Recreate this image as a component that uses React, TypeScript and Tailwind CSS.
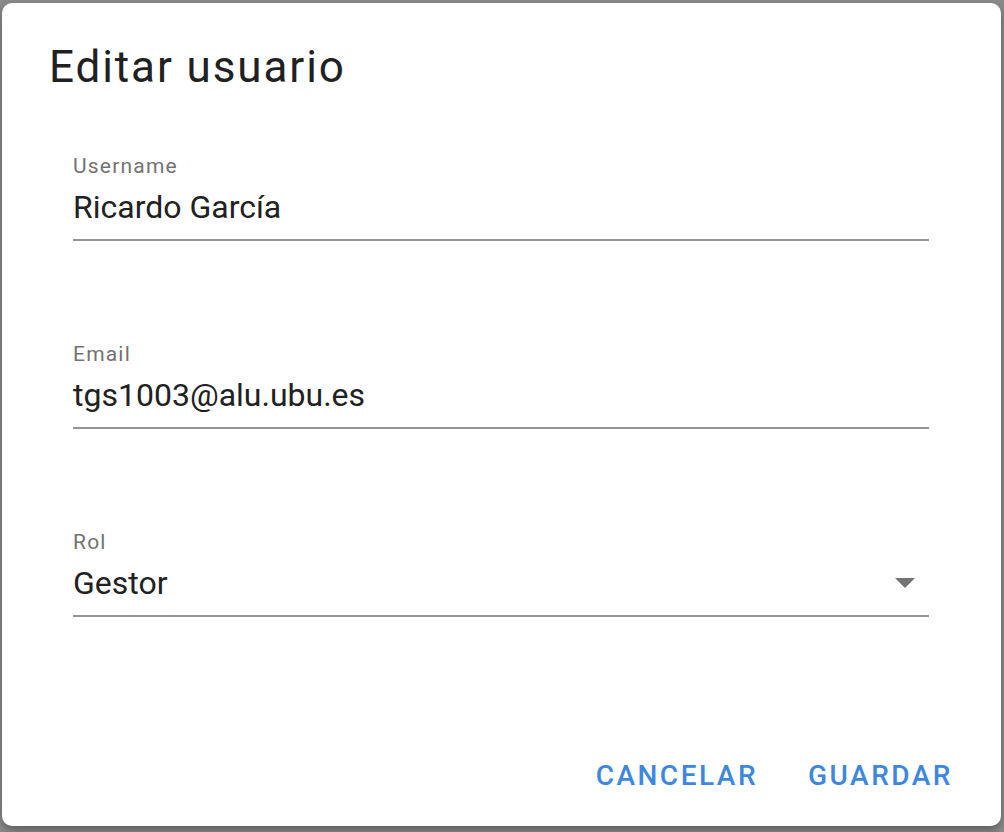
import React from "react";

const Field = ({ label, value, select }: { label: string; value: string; select?: boolean }) => {
  return (
    <div className="flex flex-col border-b-2 border-[#949494] pb-[12px]">
      <span className="text-[21px] leading-[24px] tracking-[1.2px] text-[#737373]">{label}</span>
      <div className="mt-[9px] flex items-center justify-between">
        <span className="text-[32px] leading-[40px] text-[#212121]">{value}</span>
        {select && (
          <svg width="20" height="10" viewBox="0 0 20 10" className="mr-[14px]">
            <path d="M0 0 L20 0 L10 10 Z" fill="#737373" />
          </svg>
        )}
      </div>
    </div>
  );
};

export default function App() {
  return (
    <div
      className="h-[832px] w-full overflow-hidden bg-[#8b8b8b] pt-[3px] pl-[2px]"
      style={{ fontFamily: "Roboto, 'Liberation Sans', sans-serif" }}
    >
      <div className="flex h-[823px] w-[999px] flex-col rounded-[10px] bg-white shadow-[0_4px_10px_rgba(0,0,0,0.35)]">
        <h1 className="pt-[38px] pl-[47px] text-[44px] leading-[52px] tracking-[1.9px] text-[#212121]">
          Editar usuario
        </h1>

        <div className="mt-[61px] flex flex-col gap-[101px] pl-[71px] pr-[72px]">
          <Field label="Username" value="Ricardo García" />
          <Field label="Email" value="tgs1003@alu.ubu.es" />
          <Field label="Rol" value="Gestor" select />
        </div>

        <div className="mt-auto flex justify-end gap-[18px] pb-[32px] pr-[32px]">
          <button className="px-[16px] text-[28px] font-medium leading-[36px] tracking-[2.5px] text-[#3d87e0]">
            CANCELAR
          </button>
          <button className="px-[16px] text-[28px] font-medium leading-[36px] tracking-[2.5px] text-[#3d87e0]">
            GUARDAR
          </button>
        </div>
      </div>
    </div>
  );
}
